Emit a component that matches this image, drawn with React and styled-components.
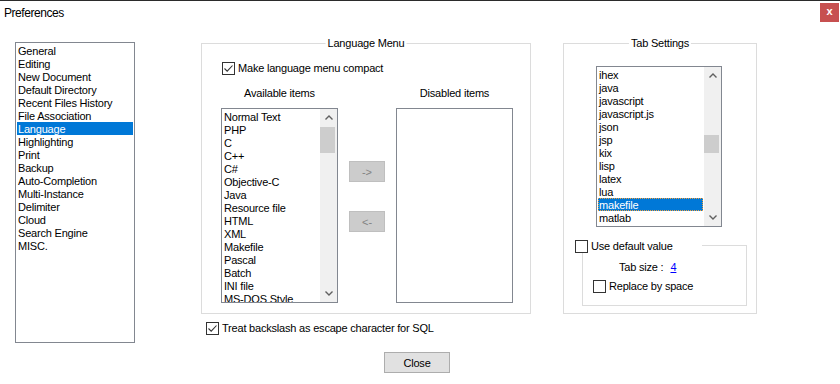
import React from "react";
import styled, { createGlobalStyle } from "styled-components";

const Global = createGlobalStyle`
  html, body { margin: 0; padding: 0; background: #fff; }
  body { font-family: "Liberation Sans", Arial, sans-serif; }
  * { box-sizing: border-box; }
`;

const Window = styled.div`
  width: 840px;
  height: 384px;
  background: #fff;
  border-top: 1px solid #2b2b2b;
  overflow: hidden;
  font-size: 11px;
  letter-spacing: -0.2px;
  color: #000;
`;

const TitleBar = styled.div`
  height: 23px;
  display: flex;
  align-items: center;
  justify-content: space-between;
  padding: 0 1px 0 4px;
`;

const TitleText = styled.div`
  font-size: 12px;
  letter-spacing: -0.45px;
`;

const CloseX = styled.div`
  width: 19px;
  height: 19px;
  background: #c75050;
  color: #fff;
  font-weight: bold;
  font-size: 11px;
  letter-spacing: 0;
  display: flex;
  align-items: center;
  justify-content: center;
  line-height: 1;
  padding-bottom: 2px;
`;

const Main = styled.div`
  display: flex;
  align-items: flex-start;
  padding: 18px 0 0 15px;
`;

const ListBox = styled.div`
  width: ${(p) => p.$w}px;
  height: ${(p) => p.$h}px;
  margin-left: ${(p) => p.$ml || 0}px;
  border: 1px solid #828790;
  background: #fff;
  display: flex;
  overflow: hidden;
  flex-shrink: 0;
`;

const Items = styled.div`
  flex: 1;
  padding: 1px;
  overflow: hidden;
`;

const Row = styled.div`
  height: 13px;
  line-height: 14px;
  padding-left: 1px;
  white-space: nowrap;
  overflow: hidden;
  background: ${(p) => (p.$sel ? "#0078d7" : "transparent")};
  color: ${(p) => (p.$sel ? "#fff" : "#000")};
  outline: ${(p) => (p.$focus ? "1px dotted #f0a040" : "none")};
  outline-offset: -1px;
`;

const ScrollBar = styled.div`
  width: 17px;
  background: #f0f0f0;
  display: flex;
  flex-direction: column;
  flex-shrink: 0;
`;

const Arrow = styled.div`
  height: 17px;
  display: flex;
  align-items: center;
  justify-content: center;
  flex-shrink: 0;
`;

const Track = styled.div`
  flex: 1;
  padding-top: ${(p) => p.$offset}px;
`;

const Thumb = styled.div`
  width: 15px;
  height: ${(p) => p.$h}px;
  background: #cdcdcd;
`;

const Chevron = ({ up }) => (
  <svg width="8" height="5" viewBox="0 0 8 5">
    <path
      d={up ? "M0.5 4.5 L4 1 L7.5 4.5" : "M0.5 0.5 L4 4 L7.5 0.5"}
      fill="none"
      stroke="#606060"
      strokeWidth="1.4"
    />
  </svg>
);

const Scroll = ({ offset, h }) => (
  <ScrollBar>
    <Arrow>
      <Chevron up />
    </Arrow>
    <Track $offset={offset}>
      <Thumb $h={h} />
    </Track>
    <Arrow>
      <Chevron />
    </Arrow>
  </ScrollBar>
);

const MidCol = styled.div`
  margin-left: 66px;
  margin-top: 1px;
  width: 330px;
  flex-shrink: 0;
`;

const Group = styled.div`
  position: relative;
  width: ${(p) => p.$w}px;
  height: ${(p) => p.$h}px;
  border: 1px solid #dcdcdc;
  padding: ${(p) => p.$pad};
`;

const Legend = styled.div`
  position: absolute;
  top: -7px;
  left: 50%;
  transform: translateX(-50%);
  background: #fff;
  padding: 0 2px;
  line-height: 13px;
  white-space: nowrap;
`;

const CheckRow = styled.label`
  display: flex;
  align-items: center;
  gap: 3px;
  height: 13px;
  line-height: 13px;
  white-space: nowrap;
  margin: ${(p) => p.$m || "0"};
`;

const Box = styled.span`
  width: 13px;
  height: 13px;
  border: 1px solid #333;
  background: #fff;
  display: flex;
  align-items: center;
  justify-content: center;
  flex-shrink: 0;
`;

const Check = ({ checked }) => (
  <Box>
    {checked && (
      <svg width="11" height="11" viewBox="0 0 11 11">
        <path d="M1.5 5.5 L4.2 8.2 L9.5 2.5" fill="none" stroke="#333" strokeWidth="1.1" />
      </svg>
    )}
  </Box>
);

const Columns = styled.div`
  display: grid;
  grid-template-columns: 117px 58px 117px;
  margin: 12px 0 0 -1px;
`;

const Column = styled.div`
  display: flex;
  flex-direction: column;
  align-items: center;
`;

const ColLabel = styled.div`
  height: 13px;
  line-height: 13px;
  margin-bottom: 8px;
  white-space: nowrap;
`;

const ButtonCol = styled.div`
  display: flex;
  flex-direction: column;
  align-items: center;
  gap: 29px;
  padding-top: 74px;
`;

const MoveBtn = styled.div`
  width: 36px;
  height: 21px;
  background: #cccccc;
  border: 1px solid #bfbfbf;
  color: #838383;
  display: flex;
  align-items: center;
  justify-content: center;
  letter-spacing: 0;
`;

const RightCol = styled.div`
  margin-left: 32px;
  margin-top: 1px;
  flex-shrink: 0;
`;

const InnerGroup = styled.div`
  position: relative;
  width: 165px;
  height: 61px;
  margin: 18px 0 0 18px;
  border: 1px solid #dcdcdc;
  padding: 15px 0 0 0;
`;

const BoxLegend = styled.div`
  position: absolute;
  top: -6px;
  left: -8px;
  width: 127px;
  background: #fff;
`;

const SizeRow = styled.div`
  display: flex;
  gap: 7px;
  height: 13px;
  line-height: 13px;
  padding-left: 36px;
`;

const Link = styled.span`
  color: #0000ff;
  text-decoration: underline;
`;

const Footer = styled.div`
  display: flex;
  padding-left: 384px;
  margin-top: 9px;
`;

const CloseBtn = styled.div`
  width: 66px;
  height: 21px;
  background: #e1e1e1;
  border: 1px solid #adadad;
  display: flex;
  align-items: center;
  justify-content: center;
`;

const categories = [
  "General", "Editing", "New Document", "Default Directory", "Recent Files History",
  "File Association", "Language", "Highlighting", "Print", "Backup", "Auto-Completion",
  "Multi-Instance", "Delimiter", "Cloud", "Search Engine", "MISC.",
];

const available = [
  "Normal Text", "PHP", "C", "C++", "C#", "Objective-C", "Java", "Resource file", "HTML",
  "XML", "Makefile", "Pascal", "Batch", "INI file", "MS-DOS Style",
];

const tabLangs = [
  "ihex", "java", "javascript", "javascript.js", "json", "jsp", "kix", "lisp", "latex",
  "lua", "makefile", "matlab", "mmixal",
];

export default function App() {
  return (
    <>
      <Global />
      <Window>
        <TitleBar>
          <TitleText>Preferences</TitleText>
          <CloseX>x</CloseX>
        </TitleBar>
        <Main>
          <ListBox $w={120} $h={301}>
            <Items>
              {categories.map((c) => (
                <Row key={c} $sel={c === "Language"}>{c}</Row>
              ))}
            </Items>
          </ListBox>

          <MidCol>
            <Group $w={330} $h={271} $pad="18px 0 0 20px">
              <Legend>Language Menu</Legend>
              <CheckRow>
                <Check checked />
                Make language menu compact
              </CheckRow>
              <Columns>
                <Column>
                  <ColLabel>Available items</ColLabel>
                  <ListBox $w={117} $h={195}>
                    <Items>
                      {available.map((a) => (
                        <Row key={a}>{a}</Row>
                      ))}
                    </Items>
                    <Scroll offset={1} h={26} />
                  </ListBox>
                </Column>
                <ButtonCol>
                  <MoveBtn>-&gt;</MoveBtn>
                  <MoveBtn>&lt;-</MoveBtn>
                </ButtonCol>
                <Column>
                  <ColLabel>Disabled items</ColLabel>
                  <ListBox $w={117} $h={195} />
                </Column>
              </Columns>
            </Group>
            <CheckRow $m="8px 0 0 5px">
              <Check checked />
              Treat backslash as escape character for SQL
            </CheckRow>
          </MidCol>

          <RightCol>
            <Group $w={194} $h={271} $pad="22px 0 0 0">
              <Legend>Tab Settings</Legend>
              <ListBox $w={126} $h={161} $ml={32}>
                <Items>
                  {tabLangs.map((t) => (
                    <Row key={t} $sel={t === "makefile"} $focus={t === "makefile"}>{t}</Row>
                  ))}
                </Items>
                <Scroll offset={51} h={18} />
              </ListBox>
              <InnerGroup>
                <BoxLegend>
                  <CheckRow>
                    <Check />
                    Use default value
                  </CheckRow>
                </BoxLegend>
                <SizeRow>
                  <span>Tab size :</span>
                  <Link>4</Link>
                </SizeRow>
                <CheckRow $m="6px 0 0 10px">
                  <Check />
                  Replace by space
                </CheckRow>
              </InnerGroup>
            </Group>
          </RightCol>
        </Main>
        <Footer>
          <CloseBtn>Close</CloseBtn>
        </Footer>
      </Window>
    </>
  );
}
